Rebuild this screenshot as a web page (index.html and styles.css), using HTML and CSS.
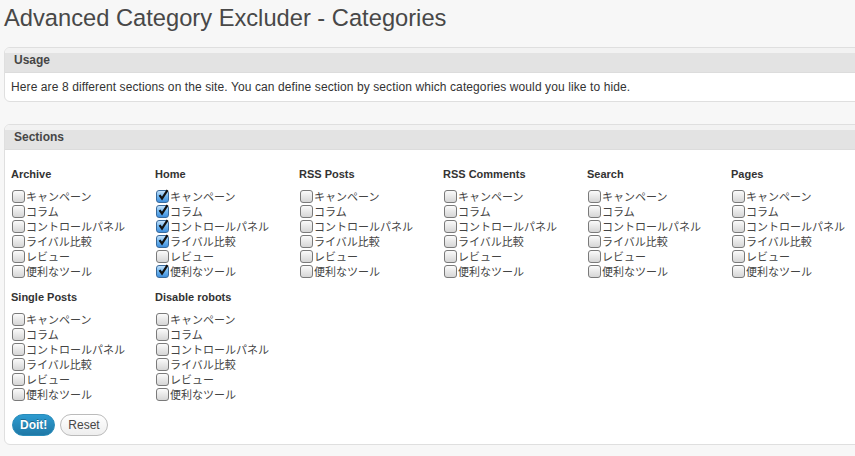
FILE: index.html
```html
<!DOCTYPE html>
<html>

<head>
    <title>Advanced Category Excluder - Categories</title>
    <link rel="stylesheet" href="styles.css">
</head>

<body>
    <div class="wrap">
        <h2 class="page-title">Advanced Category Excluder - Categories</h2>

        <div class="postbox">
            <h3 class="hndle">Usage</h3>
            <div class="inside usage">
                Here are 8 different sections on the site. You can define section by section which categories would you like to hide.
            </div>
        </div>

        <div class="postbox">
            <h3 class="hndle">Sections</h3>
            <div class="inside sections">
                <div class="section-grid">
                    <div class="section">
                        <h4>Archive</h4>
                        <label><span class="cb"></span>キャンペーン</label>
                        <label><span class="cb"></span>コラム</label>
                        <label><span class="cb"></span>コントロールパネル</label>
                        <label><span class="cb"></span>ライバル比較</label>
                        <label><span class="cb"></span>レビュー</label>
                        <label><span class="cb"></span>便利なツール</label>
                    </div>
                    <div class="section">
                        <h4>Home</h4>
                        <label><span class="cb on"><svg viewBox="0 0 12 12"><path d="M2.5 6.2 L5 9.5 L10.5 1.2" /></svg></span>キャンペーン</label>
                        <label><span class="cb on"><svg viewBox="0 0 12 12"><path d="M2.5 6.2 L5 9.5 L10.5 1.2" /></svg></span>コラム</label>
                        <label><span class="cb on"><svg viewBox="0 0 12 12"><path d="M2.5 6.2 L5 9.5 L10.5 1.2" /></svg></span>コントロールパネル</label>
                        <label><span class="cb on"><svg viewBox="0 0 12 12"><path d="M2.5 6.2 L5 9.5 L10.5 1.2" /></svg></span>ライバル比較</label>
                        <label><span class="cb"></span>レビュー</label>
                        <label><span class="cb on"><svg viewBox="0 0 12 12"><path d="M2.5 6.2 L5 9.5 L10.5 1.2" /></svg></span>便利なツール</label>
                    </div>
                    <div class="section">
                        <h4>RSS Posts</h4>
                        <label><span class="cb"></span>キャンペーン</label>
                        <label><span class="cb"></span>コラム</label>
                        <label><span class="cb"></span>コントロールパネル</label>
                        <label><span class="cb"></span>ライバル比較</label>
                        <label><span class="cb"></span>レビュー</label>
                        <label><span class="cb"></span>便利なツール</label>
                    </div>
                    <div class="section">
                        <h4>RSS Comments</h4>
                        <label><span class="cb"></span>キャンペーン</label>
                        <label><span class="cb"></span>コラム</label>
                        <label><span class="cb"></span>コントロールパネル</label>
                        <label><span class="cb"></span>ライバル比較</label>
                        <label><span class="cb"></span>レビュー</label>
                        <label><span class="cb"></span>便利なツール</label>
                    </div>
                    <div class="section">
                        <h4>Search</h4>
                        <label><span class="cb"></span>キャンペーン</label>
                        <label><span class="cb"></span>コラム</label>
                        <label><span class="cb"></span>コントロールパネル</label>
                        <label><span class="cb"></span>ライバル比較</label>
                        <label><span class="cb"></span>レビュー</label>
                        <label><span class="cb"></span>便利なツール</label>
                    </div>
                    <div class="section">
                        <h4>Pages</h4>
                        <label><span class="cb"></span>キャンペーン</label>
                        <label><span class="cb"></span>コラム</label>
                        <label><span class="cb"></span>コントロールパネル</label>
                        <label><span class="cb"></span>ライバル比較</label>
                        <label><span class="cb"></span>レビュー</label>
                        <label><span class="cb"></span>便利なツール</label>
                    </div>
                    <div class="section">
                        <h4>Single Posts</h4>
                        <label><span class="cb"></span>キャンペーン</label>
                        <label><span class="cb"></span>コラム</label>
                        <label><span class="cb"></span>コントロールパネル</label>
                        <label><span class="cb"></span>ライバル比較</label>
                        <label><span class="cb"></span>レビュー</label>
                        <label><span class="cb"></span>便利なツール</label>
                    </div>
                    <div class="section">
                        <h4>Disable robots</h4>
                        <label><span class="cb"></span>キャンペーン</label>
                        <label><span class="cb"></span>コラム</label>
                        <label><span class="cb"></span>コントロールパネル</label>
                        <label><span class="cb"></span>ライバル比較</label>
                        <label><span class="cb"></span>レビュー</label>
                        <label><span class="cb"></span>便利なツール</label>
                    </div>
                </div>

                <div class="actions">
                    <button class="button-primary">Doit!</button>
                    <button class="button">Reset</button>
                </div>
            </div>
        </div>
    </div>
</body>

</html>
```

FILE: styles.css
```css
body {
    margin: 0;
    background-color: #f7f7f7;
    font-family: "Liberation Sans", Arial, "Noto Sans CJK JP", sans-serif;
    font-size: 12px;
    color: #333333;
    overflow-x: hidden;
}

.wrap {
    padding-left: 4px;
    margin-right: -12px;
}

.page-title {
    margin: 0;
    padding: 5px 0 0 0;
    height: 47px;
    box-sizing: border-box;
    font-size: 23.7px;
    font-weight: normal;
    color: #484848;
    line-height: 26px;
}

.postbox {
    background-color: #ffffff;
    border: 1px solid #dfdfdf;
    border-radius: 6px;
    margin-bottom: 22px;
    overflow: hidden;
}

.hndle {
    margin: 0;
    height: 24px;
    line-height: 24px;
    padding-left: 9px;
    font-size: 12px;
    font-weight: bold;
    color: #464646;
    background: linear-gradient(to bottom, #f2f2f2 0%, #f2f2f2 20%, #e3e3e3 21%, #e3e3e3 100%);
    border-bottom: 1px solid #dcdcdc;
}

.inside {
    padding: 0 6px;
}

.usage {
    height: 28px;
    line-height: 28px;
    color: #333333;
    letter-spacing: 0.1px;
}

.sections {
    padding-top: 17px;
    padding-bottom: 8px;
}

.section-grid {
    display: grid;
    grid-template-columns: repeat(6, 144px);
    row-gap: 12px;
}

.section h4 {
    margin: 0 0 6px 0;
    font-size: 11px;
    line-height: 15px;
    font-weight: bold;
    color: #333333;
}

.section label {
    display: flex;
    align-items: center;
    height: 15px;
    font-family: "Noto Sans CJK JP", sans-serif;
    font-size: 11px;
    color: #444444;
    white-space: nowrap;
}

.cb {
    display: inline-block;
    position: relative;
    width: 11px;
    height: 11px;
    margin: 1px 1px 0 1px;
    border: 1px solid #7a7a7a;
    border-radius: 3px;
    background: linear-gradient(to bottom, #fbfbfb 0%, #e8e8e8 50%, #d6d6d6 100%);
    flex-shrink: 0;
}

.cb.on {
    background: linear-gradient(to bottom, #c6e3fb 0%, #6fb5ef 50%, #3f8fdd 100%);
    border-color: #3a6a9b;
}

.cb svg {
    position: absolute;
    left: 0;
    top: -2px;
    width: 12px;
    height: 12px;
}

.cb svg path {
    fill: none;
    stroke: #111111;
    stroke-width: 2.2;
}

.actions {
    display: flex;
    gap: 5px;
    margin-top: 13px;
    padding-left: 1px;
}

.button-primary,
.button {
    height: 22px;
    padding: 0 7px;
    border-radius: 11px;
    font-family: "Liberation Sans", Arial, sans-serif;
    font-size: 12px;
    cursor: pointer;
}

.button-primary {
    background: linear-gradient(to bottom, #2d9bd0 0%, #1f78a6 100%);
    border: 1px solid #298cba;
    color: #ffffff;
    font-weight: bold;
    text-shadow: 0 -1px 0 rgba(0, 0, 0, 0.3);
}

.button {
    background: linear-gradient(to bottom, #ffffff 0%, #eeeeee 100%);
    border: 1px solid #bbbbbb;
    color: #464646;
}
```
